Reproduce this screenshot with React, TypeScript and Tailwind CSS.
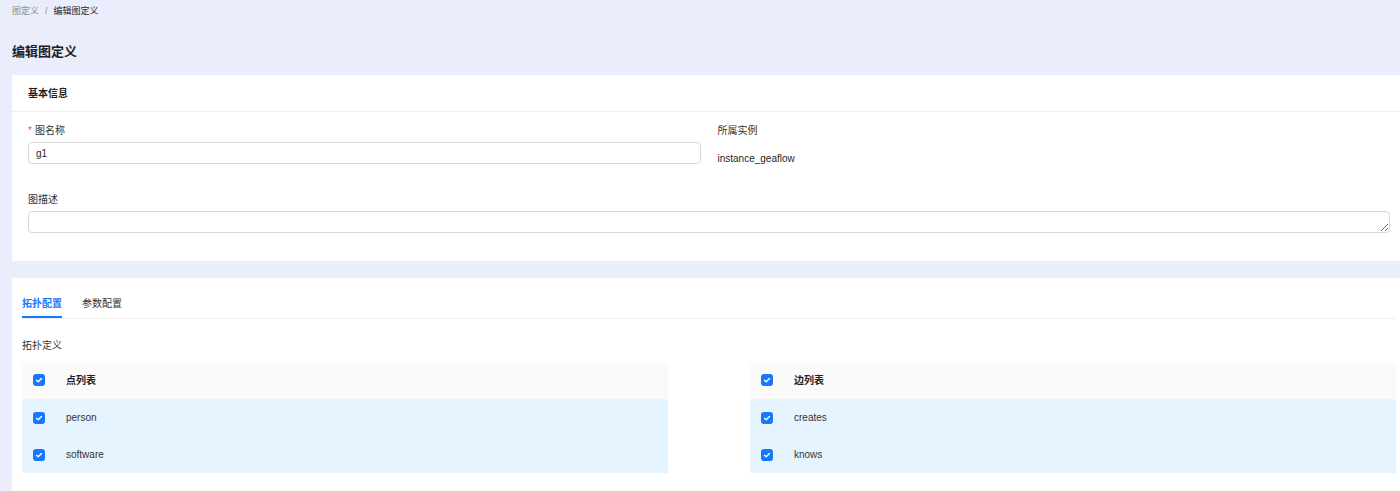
import React from 'react';

const FONT = '"Liberation Sans", "Noto Sans CJK SC", sans-serif';

type Row = { name: string; checked: boolean };

// Small blue checkbox, antd-like
function Check({ checked }: { checked: boolean }) {
  return (
    <span
      className={`inline-flex h-[12px] w-[12px] items-center justify-center rounded-[3px] ${
        checked ? 'bg-[#1677ff]' : 'border border-[#d9d9d9] bg-white'
      }`}
    >
      {checked && (
        <svg width="8" height="8" viewBox="0 0 8 8" fill="none">
          <path d="M1.5 4.2 L3.2 5.8 L6.5 2.4" stroke="white" strokeWidth="1.4" strokeLinecap="round" strokeLinejoin="round" />
        </svg>
      )}
    </span>
  );
}

function ListTable({ title, rows }: { title: string; rows: Row[] }) {
  return (
    <div className="overflow-hidden rounded-t-[6px]">
      <div className="flex h-[38px] items-center bg-[#fafafa]">
        <div className="flex w-[44px] pl-[11px]">
          <Check checked />
        </div>
        <div className="text-[10px] font-bold text-[#1f1f1f]">{title}</div>
      </div>
      {rows.map((r) => (
        <div key={r.name} className="flex h-[37px] items-center bg-[#e6f4ff]">
          <div className="flex w-[44px] pl-[11px]">
            <Check checked={r.checked} />
          </div>
          <div className="text-[10px] text-[#333]">{r.name}</div>
        </div>
      ))}
    </div>
  );
}

export default function App() {
  const vertices: Row[] = [
    { name: 'person', checked: true },
    { name: 'software', checked: true },
  ];
  const edges: Row[] = [
    { name: 'creates', checked: true },
    { name: 'knows', checked: true },
  ];

  return (
    <div className="h-[491px] w-[1400px] overflow-hidden bg-[#e9edfc]" style={{ fontFamily: FONT }}>
      {/* Breadcrumb */}
      <div className="flex h-[22px] items-center gap-[6px] pl-[12px] pt-[2px] text-[9px]">
        <span className="text-[#8c8c8c]">图定义</span>
        <span className="text-[#8c8c8c]">/</span>
        <span className="text-[#262626]">编辑图定义</span>
      </div>

      {/* Title */}
      <div className="flex h-[53px] items-center pl-[12px] pt-[6px] text-[13px] font-bold text-[#1f1f1f]">
        编辑图定义
      </div>

      {/* Basic info card */}
      <div className="ml-[12px] w-[1394px] bg-white">
        <div className="flex h-[37px] items-center border-b border-[#f0f0f0] pl-[16px] text-[10px] font-bold text-[#1f1f1f]">
          基本信息
        </div>
        <div className="px-[16px] pb-[28px] pt-[11px]">
          <div className="grid grid-cols-2 gap-x-[17px]">
            <div>
              <div className="flex h-[14px] items-center text-[10px] text-[#333]">
                <span className="mr-[3px] text-[#ff4d4f]">*</span>图名称
              </div>
              <div className="mt-[5px] flex h-[22px] items-center rounded-[4px] border border-[#d9d9d9] px-[7px] text-[10px] text-[#1f1f1f]">
                g1
              </div>
            </div>
            <div>
              <div className="flex h-[14px] items-center text-[10px] text-[#333]">所属实例</div>
              <div className="mt-[15px] text-[10px] leading-[14px] text-[#1f1f1f]">instance_geaflow</div>
            </div>
          </div>
          <div className="mt-[26px] flex h-[14px] items-center text-[10px] text-[#333]">图描述</div>
          <textarea
            readOnly
            className="mt-[5px] block h-[22px] w-full resize-y rounded-[4px] border border-[#d9d9d9] px-[7px] text-[10px] outline-none"
          />
        </div>
      </div>

      {/* Topology card */}
      <div className="ml-[12px] mt-[17px] w-[1394px] bg-white px-[10px] pt-[12px]">
        <div className="flex h-[29px] items-stretch gap-[20px] border-b border-[#f0f0f0] text-[10px]">
          <div className="flex items-center border-b-2 border-[#1677ff] pt-[1px] font-bold text-[#1677ff]">拓扑配置</div>
          <div className="flex items-center pb-[1px] text-[#333]">参数配置</div>
        </div>
        <div className="mt-[19px] flex h-[14px] items-center text-[10px] text-[#333]">拓扑定义</div>
        <div className="mt-[9px] grid grid-cols-2 gap-x-[82px]">
          <ListTable title="点列表" rows={vertices} />
          <ListTable title="边列表" rows={edges} />
        </div>
        <div className="h-[30px]" />
      </div>
    </div>
  );
}
